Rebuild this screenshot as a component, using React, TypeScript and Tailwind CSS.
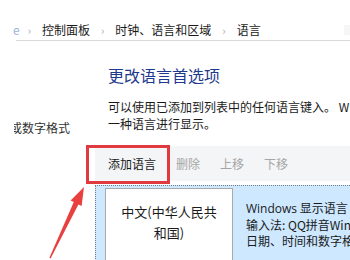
import React from 'react';

const cjk = { fontFamily: '"Noto Sans CJK SC", "Noto Sans", sans-serif' };

function Crumb({ children }: { children: React.ReactNode }) {
  return <span className="text-[12px] text-[#1a1a1a] leading-none">{children}</span>;
}

function Sep() {
  return <span className="text-[11px] text-[#a8a8a8] leading-none">›</span>;
}

export default function App() {
  return (
    <div className="relative w-[350px] h-[260px] overflow-hidden bg-white" style={cjk}>
      {/* Breadcrumb */}
      <div className="flex items-center h-[40px] pt-[20px] pl-[16px] gap-[11px]">
        <span className="text-[12px] text-[#9db6d6] leading-none -ml-[3px] -mr-[3px]">e</span>
        <Sep />
        <Crumb>控制面板</Crumb>
        <Sep />
        <Crumb>时钟、语言和区域</Crumb>
        <Sep />
        <Crumb>语言</Crumb>
        <div className="ml-auto w-[6px] h-[10px] bg-[#f6f6f6]" />
      </div>
      <div className="ml-[16px] h-px bg-[#d9d9d9]" />

      <div className="flex">
        {/* Left nav */}
        <div className="w-[95px] shrink-0 pl-[14px] pt-[78px]">
          <div className="overflow-hidden">
            <div className="-ml-[4px] text-[12px] text-[#333] whitespace-nowrap">或数字格式</div>
          </div>
        </div>

        {/* Main */}
        <div className="flex-1 min-w-0">
          <div className="pl-[13px] pt-[24px]">
            <h1 className="text-[16px] text-[#1e3a8c] leading-[20px] whitespace-nowrap">更改语言首选项</h1>
            <p className="mt-[13px] text-[12px] leading-[17px] text-[#1a1a1a] whitespace-nowrap">
              可以使用已添加到列表中的任何语言键入。 Windows<br />
              一种语言进行显示。
            </p>
          </div>

          {/* Toolbar */}
          <div className="mt-[14px] h-[35px] bg-[#f4f5f7] flex items-center pl-[13px] gap-[20px] text-[12px] whitespace-nowrap">
            <span className="text-[#1a1a1a]">添加语言</span>
            <span className="text-[#a5a5a5]">删除</span>
            <span className="text-[#a5a5a5]">上移</span>
            <span className="text-[#a5a5a5]">下移</span>
          </div>

          {/* Language list */}
          <div className="mt-[4px] border border-dotted border-[#6f7f90] border-r-0 border-b-0 bg-[#cde8ff] h-[80px] flex pl-[9px] pt-[2px]">
            <div className="w-[128px] shrink-0 bg-white border border-[#a9a9a9] flex flex-col items-center pt-[12px] text-[13px] leading-[21px] text-[#1a1a1a]">
              <span>中文(中华人民共</span>
              <span>和国)</span>
            </div>
            <div className="pl-[13px] pt-[12px] text-[12px] leading-[16px] text-[#1a1a1a] whitespace-nowrap">
              <div><span style={{ fontFamily: '"Open Sans", "Noto Sans", sans-serif' }}>Windows</span> 显示语言</div>
              <div>输入法: QQ拼音Windows</div>
              <div>日期、时间和数字格式</div>
            </div>
          </div>
        </div>
      </div>

      {/* Annotation: red box */}
      <div className="absolute left-[86px] top-[145px] w-[84px] h-[39px] border-[3px] border-[#e03a3e]" />

      {/* Annotation: red arrow */}
      <svg className="absolute left-0 top-0" width="350" height="260" viewBox="0 0 350 260">
        <polygon
          points="84,187 81.6,206 78.4,204.4 50.6,258.4 49.4,257.8 73.8,202 70.6,200.4"
          fill="#e8403f"
        />
      </svg>
    </div>
  );
}
